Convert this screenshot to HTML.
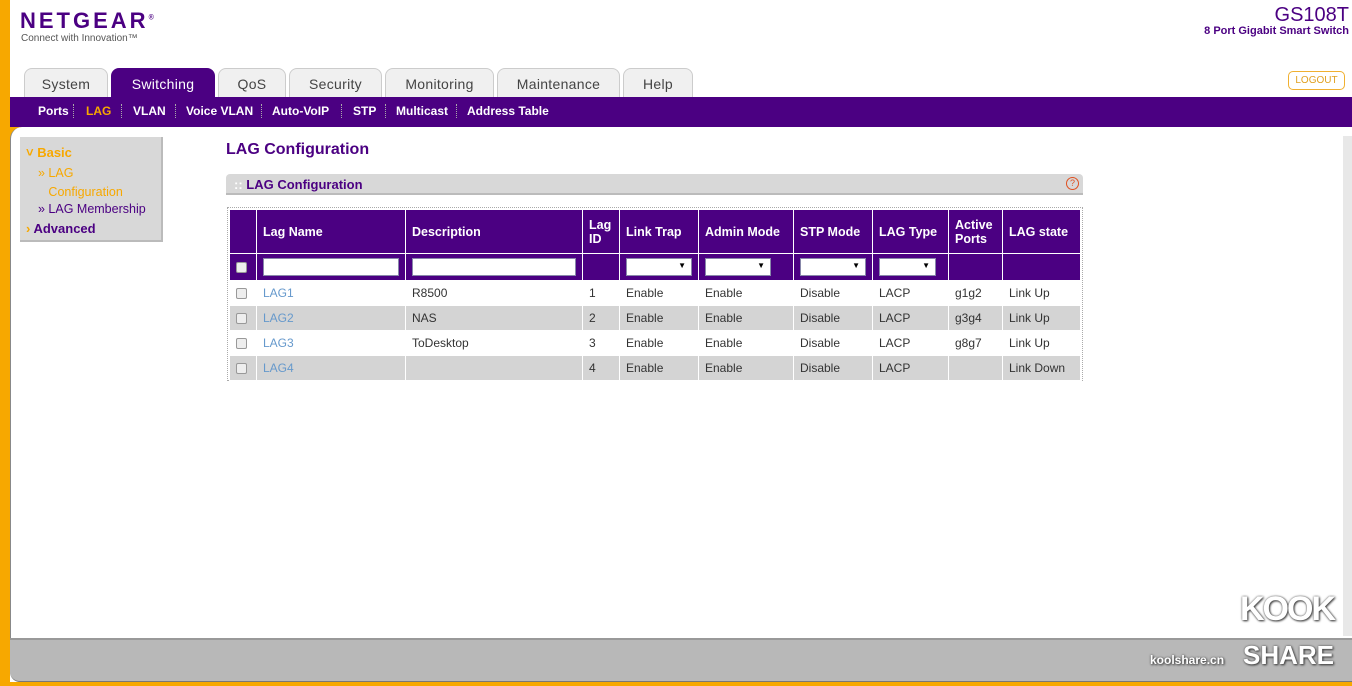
<!DOCTYPE html>
<html><head><style>
*{margin:0;padding:0;box-sizing:border-box}
body{width:1352px;height:686px;overflow:hidden;background:#fff;font-family:"Liberation Sans",sans-serif;position:relative}
.abs{position:absolute}
.tab{position:absolute;top:68px;height:30px;background:#f0f0f0;border:1px solid #ccc;border-bottom:none;border-radius:8px 8px 0 0;font-size:14px;color:#444;text-align:center;line-height:30px;letter-spacing:.3px}
.sub{position:absolute;top:104px;font-size:12px;color:#fff;font-weight:bold}
.sep{position:absolute;top:104px;height:14px;border-left:1px dotted #aaa}
table{border-collapse:collapse;font-size:12px}
td,th{border:1px solid #fff;padding:0 6px;text-align:left;white-space:nowrap}
th{background:#4b0082;color:#fff;font-size:12.5px}
tr.r td{height:25px;color:#333}
tr.g td{background:#d4d4d4}
.cb{display:inline-block;width:11px;height:11px;border:1px solid #999;border-radius:2px;background:#eee;vertical-align:middle}
.sel,.inp{display:inline-block;height:18px;background:#fff;border:1px solid #88a;position:relative;vertical-align:middle}
.sel:after{content:"▼";position:absolute;right:5px;top:2px;font-size:8px;color:#000}
a{color:#6699cc}
.kk{color:#fff;font-weight:bold;text-shadow:0 0 2px #555,1px 1px 2px #333}
</style></head><body>
<div class="abs" style="left:0;top:0;width:10px;height:686px;background:#f7a800"></div>
<div class="abs" style="left:0;top:682px;width:1352px;height:4px;background:#f7a800"></div>
<div class="abs" style="left:20px;top:8px;font-size:22px;font-weight:bold;color:#4b0082;letter-spacing:3px">NETGEAR<sup style="font-size:7px">®</sup></div>
<div class="abs" style="left:21px;top:33px;font-size:10px;color:#555">Connect with Innovation™</div>
<div class="abs" style="right:3px;top:4px;font-size:20px;color:#4b0082">GS108T</div>
<div class="abs" style="right:3px;top:25px;font-size:11px;color:#4b0082;font-weight:bold">8 Port Gigabit Smart Switch</div>
<div class="abs" style="left:1288px;top:71px;width:57px;height:19px;border:1px solid #f0b030;border-radius:5px;color:#e0a020;font-size:10px;text-align:center;line-height:17px">LOGOUT</div>
<div class="tab" style="left:24px;width:84px">System</div>
<div class="tab" style="left:111px;width:104px;background:#4b0082;color:#fff;border-color:#4b0082">Switching</div>
<div class="tab" style="left:218px;width:68px">QoS</div>
<div class="tab" style="left:289px;width:93px">Security</div>
<div class="tab" style="left:385px;width:109px">Monitoring</div>
<div class="tab" style="left:497px;width:123px">Maintenance</div>
<div class="tab" style="left:623px;width:70px">Help</div>
<div class="abs" style="left:10px;top:97px;width:1342px;height:30px;background:#4b0082"></div>
<div class="sub" style="left:38px">Ports</div><div class="sep" style="left:73px"></div>
<div class="sub" style="left:86px;color:#f7a800">LAG</div><div class="sep" style="left:121px"></div>
<div class="sub" style="left:133px">VLAN</div><div class="sep" style="left:175px"></div>
<div class="sub" style="left:186px">Voice VLAN</div><div class="sep" style="left:261px"></div>
<div class="sub" style="left:272px">Auto-VoIP</div><div class="sep" style="left:341px"></div>
<div class="sub" style="left:353px">STP</div><div class="sep" style="left:385px"></div>
<div class="sub" style="left:396px">Multicast</div><div class="sep" style="left:456px"></div>
<div class="sub" style="left:467px">Address Table</div>
<div class="abs" style="left:10px;top:127px;width:14px;height:14px;background:#f7a800"></div>
<div class="abs" style="left:10px;top:127px;width:14px;height:14px;background:#fff;border-top-left-radius:12px;border-left:1px solid #888"></div>
<div class="abs" style="left:10px;top:140px;width:1px;height:500px;background:#888"></div>
<div class="abs" style="left:1343px;top:136px;width:9px;height:500px;background:#e8e8e8"></div>
<div class="abs" style="left:20px;top:137px;width:143px;height:105px;background:#d8d8d8;border-right:2px solid #bbb;border-bottom:2px solid #bbb"></div>
<div class="abs" style="left:26px;top:145px;font-size:13px;font-weight:bold;color:#f7a800">˅ Basic</div>
<div class="abs" style="left:38px;top:164px;font-size:12.5px;color:#f7a800;line-height:19px">» LAG<br>&nbsp;&nbsp;&nbsp;Configuration</div>
<div class="abs" style="left:38px;top:202px;font-size:12.5px;color:#4b0082">» LAG Membership</div>
<div class="abs" style="left:26px;top:221px;font-size:13px;font-weight:bold;color:#4b0082"><span style="color:#f7a800">›</span> Advanced</div>
<div class="abs" style="left:226px;top:141px;font-size:16px;font-weight:bold;color:#4b0082">LAG Configuration</div>
<div class="abs" style="left:226px;top:174px;width:857px;height:21px;background:#d8d8d8;border-bottom:2px solid #bbb;border-radius:4px 4px 0 0"></div>
<div class="abs" style="left:234px;top:177px;font-size:13px;font-weight:bold;color:#4b0082"><span style="color:#fff">::</span> LAG Configuration</div>
<div class="abs" style="left:1066px;top:177px;width:13px;height:13px;border:1px solid #e05020;border-radius:50%;font-size:9px;color:#e05020;text-align:center;line-height:11px">?</div>
<div class="abs" style="left:227px;top:207px;width:856px;height:174px;border:1px dotted #aaa"></div>
<table class="abs" style="left:229px;top:209px;width:852px">
<tr style="height:44px"><th style="width:27px"></th><th style="width:149px">Lag Name</th><th style="width:177px">Description</th><th style="width:37px">Lag<br>ID</th><th style="width:79px">Link Trap</th><th style="width:95px">Admin Mode</th><th style="width:79px">STP Mode</th><th style="width:76px">LAG Type</th><th style="width:54px">Active<br>Ports</th><th>LAG state</th></tr>
<tr style="height:27px"><th><span class="cb"></span></th><th><span class="inp" style="width:136px"></span></th><th><span class="inp" style="width:164px"></span></th><th></th><th><span class="sel" style="width:66px"></span></th><th><span class="sel" style="width:66px"></span></th><th><span class="sel" style="width:66px"></span></th><th><span class="sel" style="width:57px"></span></th><th></th><th></th></tr>
<tr class="r"><td><span class="cb"></span></td><td><a>LAG1</a></td><td>R8500</td><td>1</td><td>Enable</td><td>Enable</td><td>Disable</td><td>LACP</td><td>g1g2</td><td>Link Up</td></tr>
<tr class="r g"><td><span class="cb"></span></td><td><a>LAG2</a></td><td>NAS</td><td>2</td><td>Enable</td><td>Enable</td><td>Disable</td><td>LACP</td><td>g3g4</td><td>Link Up</td></tr>
<tr class="r"><td><span class="cb"></span></td><td><a>LAG3</a></td><td>ToDesktop</td><td>3</td><td>Enable</td><td>Enable</td><td>Disable</td><td>LACP</td><td>g8g7</td><td>Link Up</td></tr>
<tr class="r g"><td><span class="cb"></span></td><td><a>LAG4</a></td><td></td><td>4</td><td>Enable</td><td>Enable</td><td>Disable</td><td>LACP</td><td></td><td>Link Down</td></tr>
</table>
<div class="abs" style="left:10px;top:638px;width:1342px;height:2px;background:#999"></div>
<div class="abs" style="left:10px;top:640px;width:1342px;height:42px;background:#b8b8b8;border-bottom-left-radius:10px;border-bottom:1px solid #777"></div>
<div class="abs kk" style="left:1150px;top:653px;font-size:12px">koolshare.cn</div>
<div class="abs kk" style="left:1240px;top:590px;font-size:34px;letter-spacing:-2px">KOOK</div>
<div class="abs kk" style="left:1243px;top:640px;font-size:26px">SHARE</div>
</body></html>
